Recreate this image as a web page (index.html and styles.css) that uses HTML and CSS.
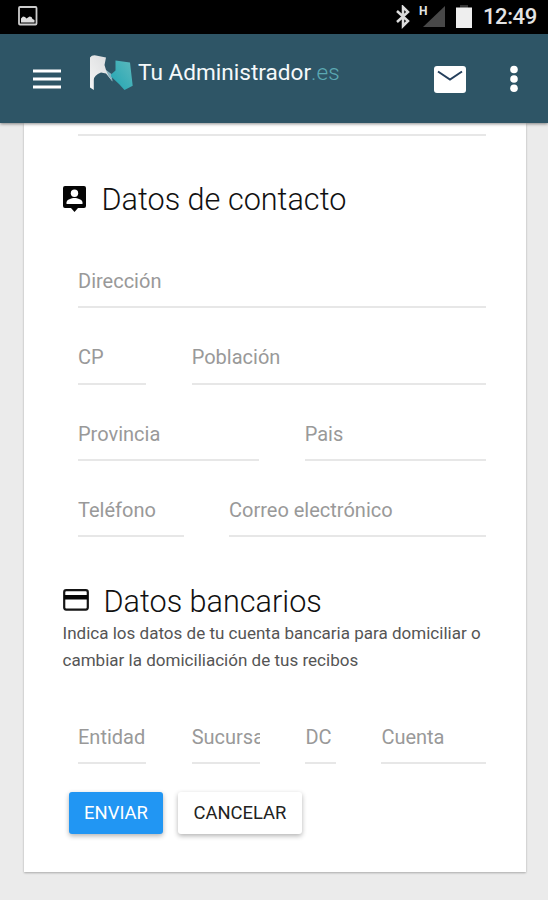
FILE: index.html
```html
<!DOCTYPE html>
<html lang="es">
<head>
<meta charset="utf-8">
<title>Tu Administrador.es</title>
<link rel="stylesheet" href="styles.css">
</head>
<body>
<div class="status">
  <svg class="status-photo" width="20" height="20" viewBox="0 0 20 20"><rect x="1" y="1" width="17.5" height="17.5" rx="1" fill="none" stroke="#ccc" stroke-width="1.8"/><path d="M3 16.500v-4l2-2 2 .5 1.500 1.500 3-2 2 .5 1 2 2 1v2.500z" fill="#ddd"/></svg>
  <svg class="status-bt" width="16" height="24" viewBox="0 0 16 24"><path d="M2 6l11 10-5 5V2l5 5L2 17" fill="none" stroke="#ddd" stroke-width="2.500"/></svg>
  <span class="status-net">H</span>
  <svg class="status-signal" width="22" height="21" viewBox="0 0 22 21"><path d="M22 0v21H0z" fill="#484848"/></svg>
  <svg class="status-battery" width="16" height="23" viewBox="0 0 16 23"><path d="M4 0h8v3H4z" fill="#333"/><path d="M0 2.500h16V23H0z" fill="#eee"/></svg>
  <span class="status-time">12:49</span>
</div>
<header class="appbar">
  <svg class="menu" width="28" height="20" viewBox="0 0 28 20"><path d="M0 2h28M0 10h28M0 18h28" stroke="#fff" stroke-width="3"/></svg>
  <svg class="logo" width="44" height="37" viewBox="0 0 44 37">
    <defs>
      <linearGradient id="silver" x1="0" y1="1" x2="1" y2="0"><stop offset="0" stop-color="#f5f5f5"/><stop offset="1" stop-color="#d8dadc"/></linearGradient>
      <linearGradient id="teal" x1="0" y1="1" x2="1" y2="0"><stop offset="0" stop-color="#20a4b3"/><stop offset="1" stop-color="#5dbabd"/></linearGradient>
    </defs>
    <path d="M1 3.500Q3 .8 7 1.500L17 3.500L15.500 11L17 16L20 19.500L23.500 27.500L17 19.500L12 18.500Q5 21 4.800 26V36L1 33.500z" fill="url(#silver)"/>
    <path d="M17 16L22.500 20L23.500 27.500L19 21z" fill="#86b2c0"/>
    <path d="M26.500 6.500L41 8.500L43.700 31.700L35.500 36L30 30L22 22.500V20.500L26.500 16.500z" fill="url(#teal)"/>
  </svg>
  <span class="brand">Tu Administrador<span class="tld">.es</span></span>
  <svg class="mail" width="32" height="27" viewBox="0 0 32 27"><rect width="32" height="27" rx="3" fill="#fff"/><path d="M4 5.500l12 8 12-8" fill="none" stroke="#243f5c" stroke-width="2"/></svg>
  <svg class="more" width="8" height="28" viewBox="0 0 8 28"><g fill="#fff"><circle cx="4" cy="4.500" r="3.800"/><circle cx="4" cy="14" r="3.800"/><circle cx="4" cy="23.200" r="3.800"/></g></svg>
</header>
<main class="card">
  <div class="stub"></div>
  <h2 class="title contact">
    <svg width="23" height="26" viewBox="0 0 23 26"><path d="M2 0h19a2 2 0 0 1 2 2v18a2 2 0 0 1-2 2h-6l-3.500 4L8 22H2a2 2 0 0 1-2-2V2a2 2 0 0 1 2-2z" fill="#050505"/><circle cx="11.500" cy="7.300" r="3.700" fill="#fff"/><path d="M3.500 18v-1.500c0-3 5-4.500 8-4.500s8 1.500 8 4.500V18z" fill="#fff"/></svg>
    <span>Datos de contacto</span>
  </h2>
  <div class="row"><div class="field full"><span>Dirección</span></div></div>
  <div class="row"><div class="field cp"><span>CP</span></div><div class="field rest"><span>Población</span></div></div>
  <div class="row"><div class="field half"><span>Provincia</span></div><div class="field rest"><span>Pais</span></div></div>
  <div class="row"><div class="field phone"><span>Teléfono</span></div><div class="field rest"><span>Correo electrónico</span></div></div>
  <h2 class="title bank">
    <svg width="26" height="22" viewBox="0 0 26 22"><rect x="1.200" y="1.200" width="23.600" height="19.400" rx="2" fill="none" stroke="#151515" stroke-width="2.200"/><path d="M1 6h24v4.500H1z" fill="#050505"/></svg>
    <span>Datos bancarios</span>
  </h2>
  <p class="hint">Indica los datos de tu cuenta bancaria para domiciliar o<br>cambiar la domiciliación de tus recibos</p>
  <div class="row"><div class="field cp"><span>Entidad</span></div><div class="field cp"><span>Sucursal</span></div><div class="field dc"><span>DC</span></div><div class="field rest"><span>Cuenta</span></div></div>
  <div class="actions"><button class="btn primary">ENVIAR</button><button class="btn plain">CANCELAR</button></div>
</main>
</body>
</html>
```
FILE: styles.css
```css
* { box-sizing: border-box; }
body {
  margin: 0;
  height: 900px;
  overflow: hidden;
  background: #ebebeb;
  font-family: Roboto, "Liberation Sans", sans-serif;
}
svg { display: block; flex: none; }
.status {
  display: flex;
  align-items: flex-start;
  height: 34px;
  background: #000;
  color: #e4e4e4;
}
.status-photo { margin: 6px 0 0 18px; }
.status-bt { margin: 5px 0 0 357px; }
.status-net { width: 12px; margin: 4px 0 0 8px; font-size: 12px; font-weight: 700; line-height: 14px; }
.status-signal { margin: 6px 11px 0 -8px; }
.status-battery { margin-top: 5px; }
.status-time { margin: 3px 0 0 11px; font-size: 22px; font-weight: 500; line-height: 28px; letter-spacing: -0.4px; }
.appbar {
  position: relative;
  z-index: 1;
  display: flex;
  align-items: flex-start;
  height: 89px;
  background: #2e5566;
  box-shadow: 0 1px 3px rgba(0, 0, 0, .45);
}
.menu { margin: 35px 0 0 33px; }
.logo { margin: 20px 0 0 28px; }
.brand {
  width: 296px;
  margin: 23px 0 0 5px;
  color: #f5f9fa;
  font-size: 22.600px;
  line-height: 31px;
  white-space: nowrap;
}
.tld { color: #5ba9b3; font-weight: 300; }
.mail { margin: 32px 0 0 0; }
.more { margin: 31px 0 0 44px; }
.card {
  width: 502px;
  height: 749px;
  margin-left: 24px;
  padding: 0 40px 0 38.500px;
  background: #fff;
  box-shadow: 0 1px 2px rgba(0, 0, 0, .28);
}
.stub { height: 12.500px; margin-left: 15.500px; border-bottom: 2px solid #e7e7e7; }
.title {
  display: flex;
  align-items: flex-start;
  margin: 0;
  color: #111;
  font-size: 30.600px;
  font-weight: 300;
  line-height: 36px;
  white-space: nowrap;
}
.contact { height: 96.500px; padding-top: 45px; }
.contact svg { margin: 5px 16px 0 0; }
.contact span { margin-top: 1px; }
.bank { height: 82.500px; padding-top: 46px; }
.bank svg { margin: 6px 15px 0 0; }
.bank span { margin-top: 1px; }
.hint { height: 68.500px; margin: 0; color: #555; font-size: 17.050px; line-height: 27.500px; white-space: nowrap; }
.row { display: flex; gap: 45.500px; height: 76.300px; padding-left: 15.500px; }
.field {
  flex: none;
  overflow: hidden;
  padding-top: 36px;
  border-bottom: 2px solid #e7e7e7;
  color: #999;
  font-size: 20px;
  line-height: 26px;
  white-space: nowrap;
}
.full, .rest { flex: 1 1 0; }
.cp { width: 68.200px; }
.half { width: 181.200px; }
.phone { width: 105.500px; }
.dc { width: 30.500px; }
.actions { display: flex; gap: 15px; padding: 28px 0 0 6.500px; }
.btn {
  height: 42px;
  padding: 0;
  border: 0;
  border-radius: 3px;
  font: 400 18.400px/42px Roboto, sans-serif;
  box-shadow: 0 2px 5px rgba(0, 0, 0, .3);
}
.primary { width: 94px; background: #2196f3; color: #fff; }
.plain { width: 124px; background: #fff; color: #222; }
```
